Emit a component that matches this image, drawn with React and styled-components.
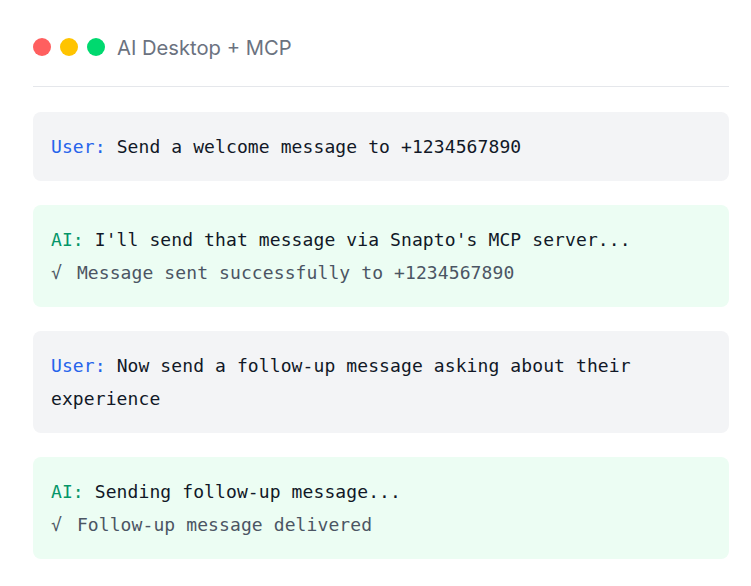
import styled, { createGlobalStyle } from "styled-components";

const GlobalStyle = createGlobalStyle`
  body {
    margin: 0;
    background: #ffffff;
    font-family: Inter, "Noto Sans", sans-serif;
  }
`;

const messages = [
  { role: "user", text: "Send a welcome message to +1234567890" },
  {
    role: "ai",
    text: "I'll send that message via Snapto's MCP server...",
    status: "Message sent successfully to +1234567890",
  },
  {
    role: "user",
    text: "Now send a follow-up message asking about their experience",
  },
  {
    role: "ai",
    text: "Sending follow-up message...",
    status: "Follow-up message delivered",
  },
];

function App() {
  return (
    <>
      <GlobalStyle />
      <Window>
        <Header>
          <Dots>
            <Dot color="#ff5f5f" />
            <Dot color="#ffc400" />
            <Dot color="#00d96f" />
          </Dots>
          <Title>AI Desktop + MCP</Title>
        </Header>
        <Chat>
          {messages.map((m, i) => (
            <Bubble key={i} role={m.role}>
              <Line>
                <Label role={m.role}>{m.role === "user" ? "User:" : "AI:"}</Label>{" "}
                {m.text}
              </Line>
              {m.status && (
                <Status>
                  <Check>√</Check> {m.status}
                </Status>
              )}
            </Bubble>
          ))}
        </Chat>
      </Window>
    </>
  );
}
export default App;

const Window = styled.div`
  padding: 34px 22px 24px 33px;
`;

const Header = styled.div`
  display: flex;
  align-items: center;
  gap: 12px;
  height: 26px;
  padding-bottom: 26px;
  border-bottom: 1px solid #e5e7eb;
`;

const Dots = styled.div`
  display: flex;
  gap: 9px;
`;

const Dot = styled.span`
  width: 18px;
  height: 18px;
  border-radius: 50%;
  background: ${(p) => p.color};
`;

const Title = styled.div`
  font-size: 20.2px;
  color: #6b7280;
`;

const Chat = styled.div`
  display: flex;
  flex-direction: column;
  gap: 24px;
  margin-top: 25px;
`;

const Bubble = styled.div`
  padding: 18px;
  border-radius: 8px;
  background: ${(p) => (p.role === "user" ? "#f3f4f6" : "#ecfdf3")};
  font-family: "DejaVu Sans Mono", "Liberation Mono", monospace;
  font-size: 18px;
  letter-spacing: 0.1px;
  line-height: 33px;
  color: #111827;
`;

const Line = styled.div``;

const Label = styled.span`
  color: ${(p) => (p.role === "user" ? "#2563eb" : "#059669")};
`;

const Status = styled.div`
  color: #4b5563;
`;

const Check = styled.span`
  display: inline-block;
  margin-right: 4px;
`;
